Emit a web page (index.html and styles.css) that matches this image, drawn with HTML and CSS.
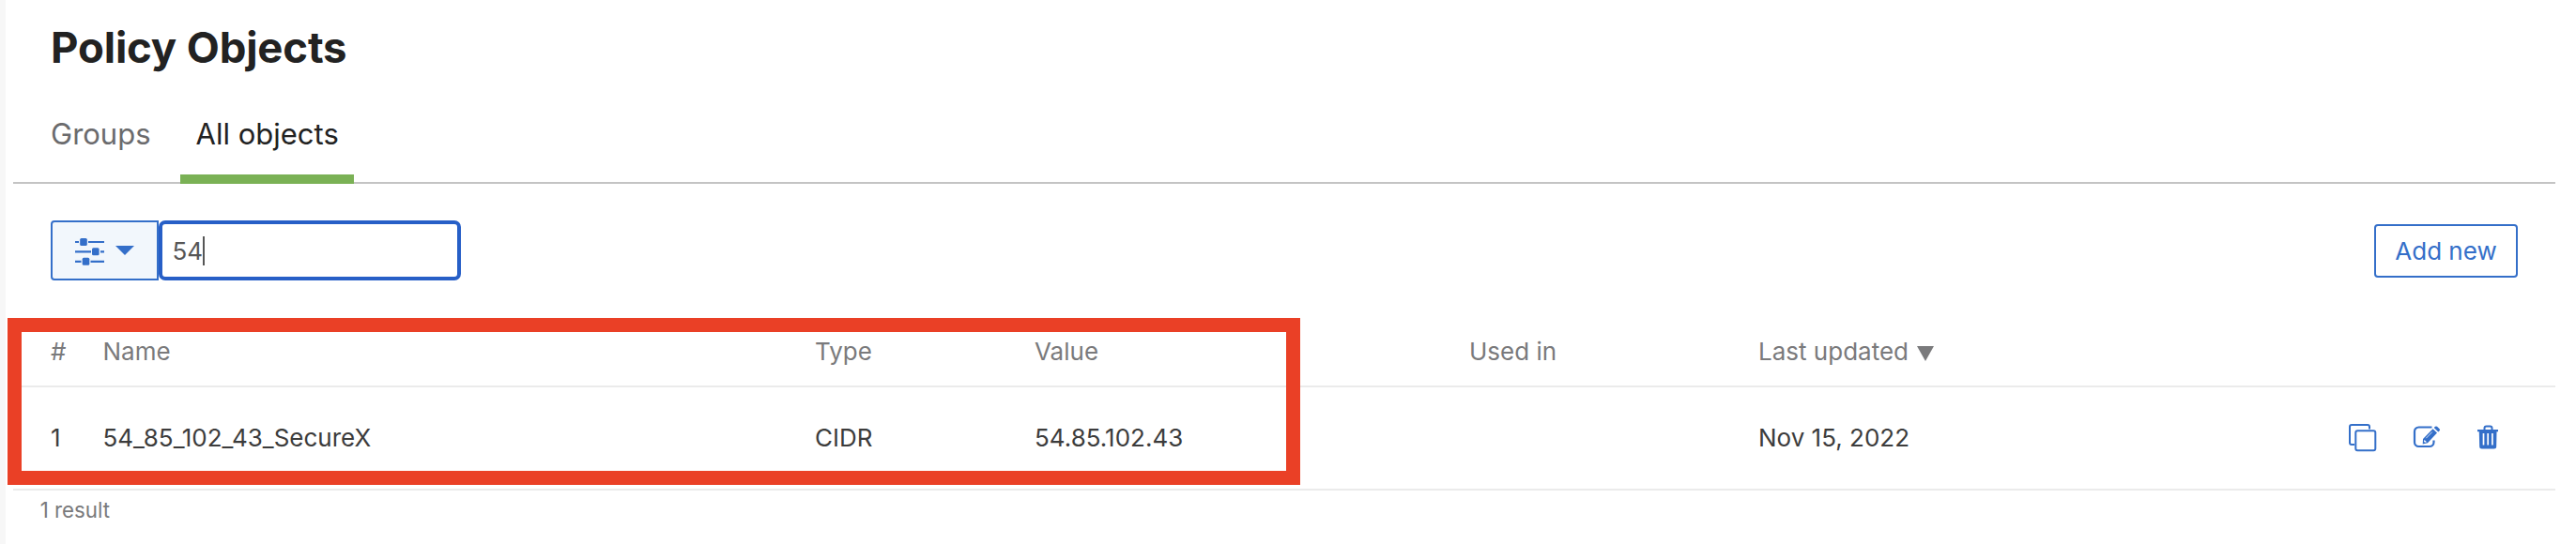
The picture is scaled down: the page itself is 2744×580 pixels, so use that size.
FILE: index.html
```html
<!DOCTYPE html>
<html lang="en">
<head>
<meta charset="utf-8">
<title>Policy Objects</title>
<link rel="stylesheet" href="styles.css">
</head>
<body>
<main class="page">
  <h1 class="title">Policy Objects</h1>
  <nav class="tabs">
    <a class="tab">Groups</a>
    <a class="tab tab-active">All objects</a>
  </nav>
  <section class="toolbar">
    <div class="search">
      <button class="filter" aria-label="Filter">
        <svg class="filter-icon" viewBox="0 0 64 30">
          <path d="M0 5h4M14 5h17M0 15.300h17M27 15.300h4M0 25.800h6.500M16.500 25.800H31" stroke="currentColor" stroke-width="2.200"/>
          <rect x="5.200" y="1" width="7.600" height="8" rx="1.500"/>
          <rect x="18" y="11.300" width="7.600" height="8" rx="1.500"/>
          <rect x="7.700" y="21.800" width="7.600" height="8" rx="1.500"/>
          <path d="M43 9h20L53 19z"/>
        </svg>
      </button>
      <div class="input">54<span class="caret"></span></div>
    </div>
    <button class="add">Add new</button>
  </section>
  <section class="table">
    <div class="row head">
      <span>#</span><span>Name</span><span>Type</span><span>Value</span><span>Used in</span>
      <span class="sorted">Last updated<svg class="arrow" viewBox="0 0 18 16"><path d="M0 0h18L9 16z"/></svg></span>
    </div>
    <div class="row item">
      <span>1</span><span>54_85_102_43_SecureX</span><span>CIDR</span><span>54.85.102.43</span><span></span><span>Nov 15, 2022</span>
      <div class="actions">
        <svg class="icon outline" viewBox="0 0 30 30">
          <path d="M6 22H3a2 2 0 0 1-2-2V3a2 2 0 0 1 2-2h17a2 2 0 0 1 2 2v2.500"/>
          <rect x="7.300" y="7.300" width="21" height="21" rx="2"/>
        </svg>
        <svg class="icon" viewBox="0 0 30 30">
          <path d="M20.500 3.500H6.500a4.500 4.500 0 0 0-4.500 4.500v11.500a4.500 4.500 0 0 0 4.500 4.500h11.500a4.500 4.500 0 0 0 4.500-4.500v-2" fill="none" stroke="currentColor" stroke-width="2.200"/>
          <path d="M11 16L21.500 5.200l4.500 4.300L16 20.200l-5.300 1.300zM22.700 4l1.300-1.200q1-.8 2 0L28.600 5.300q1 1 0 2L27.300 8.500z"/>
          <path d="M14.300 15.200l6.500-6.600" stroke="#fff" stroke-width=".8"/>
          <path d="M12.500 17l2.500 2.300-2 .5-1-1z" fill="#fff"/>
        </svg>
        <svg class="icon" viewBox="0 0 30 30">
          <path d="M8.500 6V4.500a2 2 0 0 1 2-2h4a2 2 0 0 1 2 2V6" fill="none" stroke="currentColor" stroke-width="2"/>
          <path d="M1 6h22v2.200h-1.500L21.200 24a2.500 2.500 0 0 1-2.500 2.500h-13A2.500 2.500 0 0 1 3.200 24L2.800 8.200H1z"/>
          <path d="M7.500 10v12.500M12.200 10v12.500M16.900 10v12.500" stroke="#fff" stroke-width="1.700"/>
        </svg>
      </div>
    </div>
    <div class="highlight"></div>
  </section>
  <footer class="count">1 result</footer>
</main>
</body>
</html>
```

FILE: styles.css
```css
* { box-sizing: border-box; }
body { margin: 0; height: 580px; overflow: hidden; background: #fff; font-family: Inter, sans-serif; color: #3c3c3c; }
.page { height: 580px; border-left: 6px solid #f7f7f7; padding: 22px 22px 0 8px; }
.title { margin: 0 0 0 40px; height: 58px; line-height: 58px; font-size: 45.5px; font-weight: 700; color: #222; letter-spacing: -0.15px; }
.tabs { display: flex; height: 116px; border-bottom: 2px solid #c4c4c4; padding: 20px 0 0 24px; }
.tab { height: 96px; padding: 23px 16px 0; line-height: 40px; font-size: 31px; color: #6b6b6d; }
.tab-active { margin-left: 15px; width: 185px; padding-left: 17px; padding-right: 0; color: #222; border-bottom: 10px solid #7ab155; }
.toolbar { display: flex; justify-content: space-between; height: 143px; padding: 39px 40px 0; }
.search { display: flex; height: 64px; }
.filter { display: flex; align-items: flex-start; width: 115px; border: 2px solid #346fc9; border-radius: 4px 0 0 4px; background: #f2f7fc; color: #346fc9; padding: 16px 0 0 24px; }
.filter-icon { flex: none; width: 64px; height: 30px; fill: currentColor; }
.input { display: flex; align-items: center; width: 322px; border: 4px solid #275fc7; border-radius: 7px; padding-left: 10.5px; font-size: 26px; color: #565656; }
.caret { width: 2px; height: 31px; background: #565656; }
.add { width: 153px; height: 57px; margin-top: 4px; padding: 0; border: 2px solid #346fc9; border-radius: 4px; background: #fff; color: #346fc9; font: 26px Inter, sans-serif; }
.table { position: relative; height: 184px; }
.row { display: grid; grid-template-columns: 55.5px 758.5px 234px 463px 308px 629px auto; padding-left: 40px; border-bottom: 2px solid #ebebeb; font-size: 26px; white-space: nowrap; }
.head { height: 74px; line-height: 72px; color: #7a7a7c; }
.item { height: 110px; line-height: 108px; }
.sorted { display: flex; align-items: center; gap: 8.5px; }
.arrow { width: 18px; height: 16px; fill: currentColor; margin-top: 4px; }
.actions { display: flex; gap: 38px; align-items: center; color: #346fc9; }
.icon { width: 30px; height: 30px; fill: currentColor; }
.outline { fill: none; stroke: currentColor; stroke-width: 2; }
.highlight { position: absolute; left: -6.5px; top: 0; width: 1377px; height: 178px; border: 15px solid #ea4026; }
.count { padding-left: 28.7px; height: 44px; line-height: 42px; font-size: 22.3px; color: #7a7a7c; }
```
